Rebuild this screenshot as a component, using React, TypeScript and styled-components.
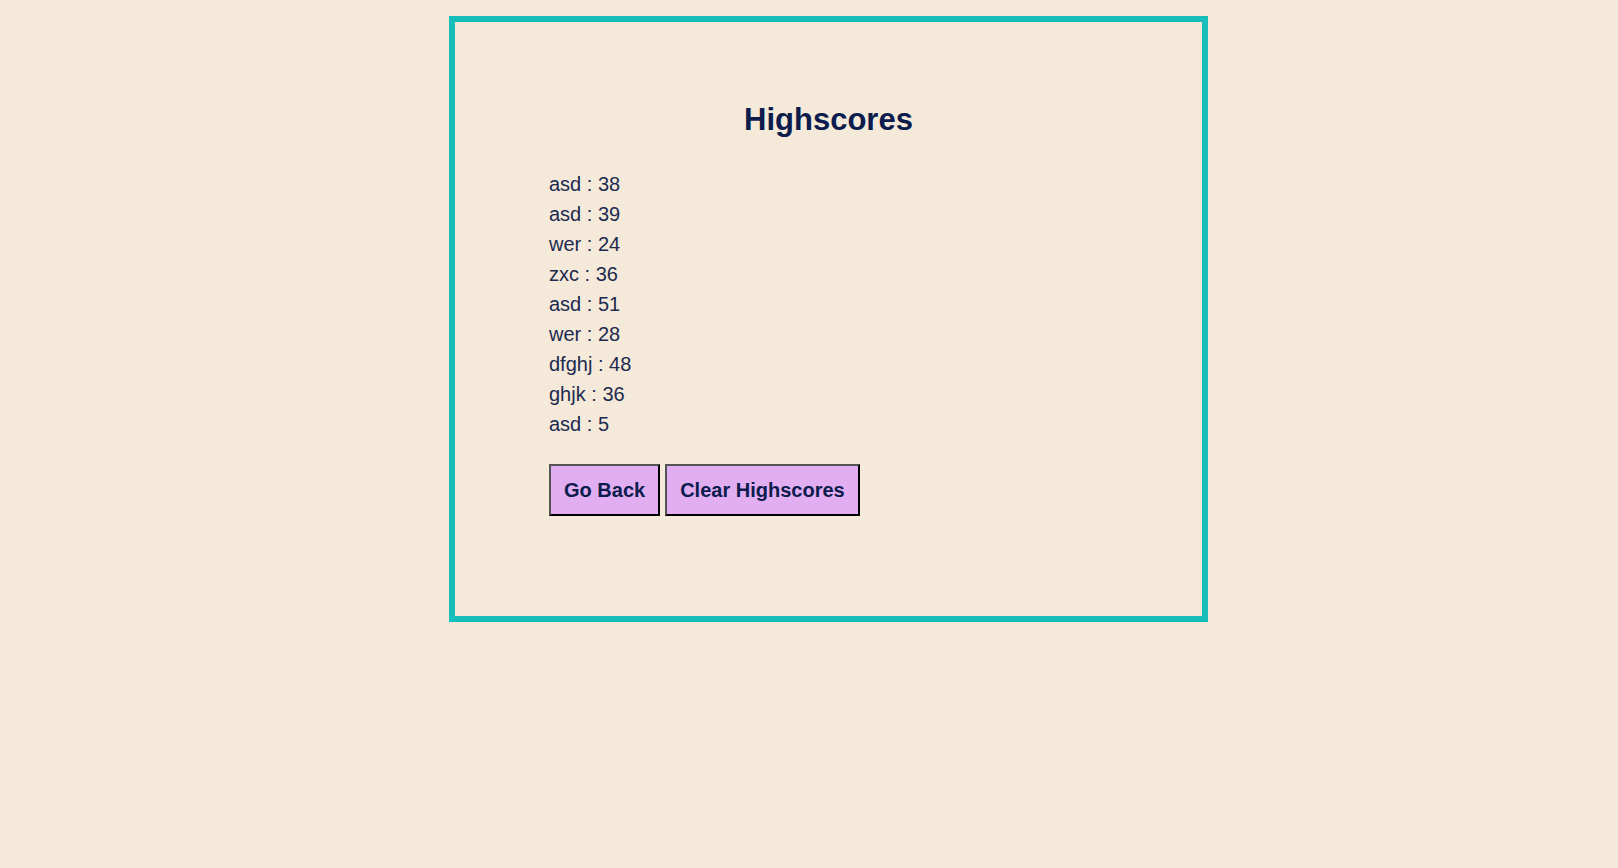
import styled, { createGlobalStyle } from 'styled-components'

const GlobalStyle = createGlobalStyle`
  html, body {
    margin: 0;
    padding: 0;
    background: #f5e9da;
    font-family: "Liberation Sans", Arial, sans-serif;
  }
`

const Page = styled.div`
  min-height: 868px;
  padding-top: 16px;
  padding-left: 449px;
  box-sizing: border-box;
`

const Card = styled.section`
  width: 759px;
  height: 606px;
  box-sizing: border-box;
  border: 6px solid #17bebb;
  padding: 80px 0 0 94px;
`

const Title = styled.h1`
  margin: 0 94px 31px 0;
  text-align: center;
  font-size: 31px;
  font-weight: bold;
  color: #0b1c4d;
  line-height: 36px;
`

const ScoreList = styled.ul`
  list-style: none;
  margin: 0 0 25px;
  padding: 0;
`

const ScoreItem = styled.li`
  font-size: 20px;
  line-height: 30px;
  color: #1d2a4f;
`

const Actions = styled.div`
  display: flex;
  gap: 5px;
`

const Button = styled.button`
  font-family: "Liberation Sans", Arial, sans-serif;
  font-size: 20px;
  font-weight: bold;
  line-height: 24px;
  color: #0b1c4d;
  background: #e2aef2;
  padding: 12px 13px;
  border: 2px solid;
  border-color: #555 #000 #000 #555;
  cursor: pointer;
`

const scores = [
  { name: 'asd', score: 38 },
  { name: 'asd', score: 39 },
  { name: 'wer', score: 24 },
  { name: 'zxc', score: 36 },
  { name: 'asd', score: 51 },
  { name: 'wer', score: 28 },
  { name: 'dfghj', score: 48 },
  { name: 'ghjk', score: 36 },
  { name: 'asd', score: 5 },
]

export default function App() {
  return (
    <>
      <GlobalStyle />
      <Page>
        <Card>
          <Title>Highscores</Title>
          <ScoreList>
            {scores.map((s, i) => (
              <ScoreItem key={i}>{s.name} : {s.score}</ScoreItem>
            ))}
          </ScoreList>
          <Actions>
            <Button>Go Back</Button>
            <Button>Clear Highscores</Button>
          </Actions>
        </Card>
      </Page>
    </>
  )
}
